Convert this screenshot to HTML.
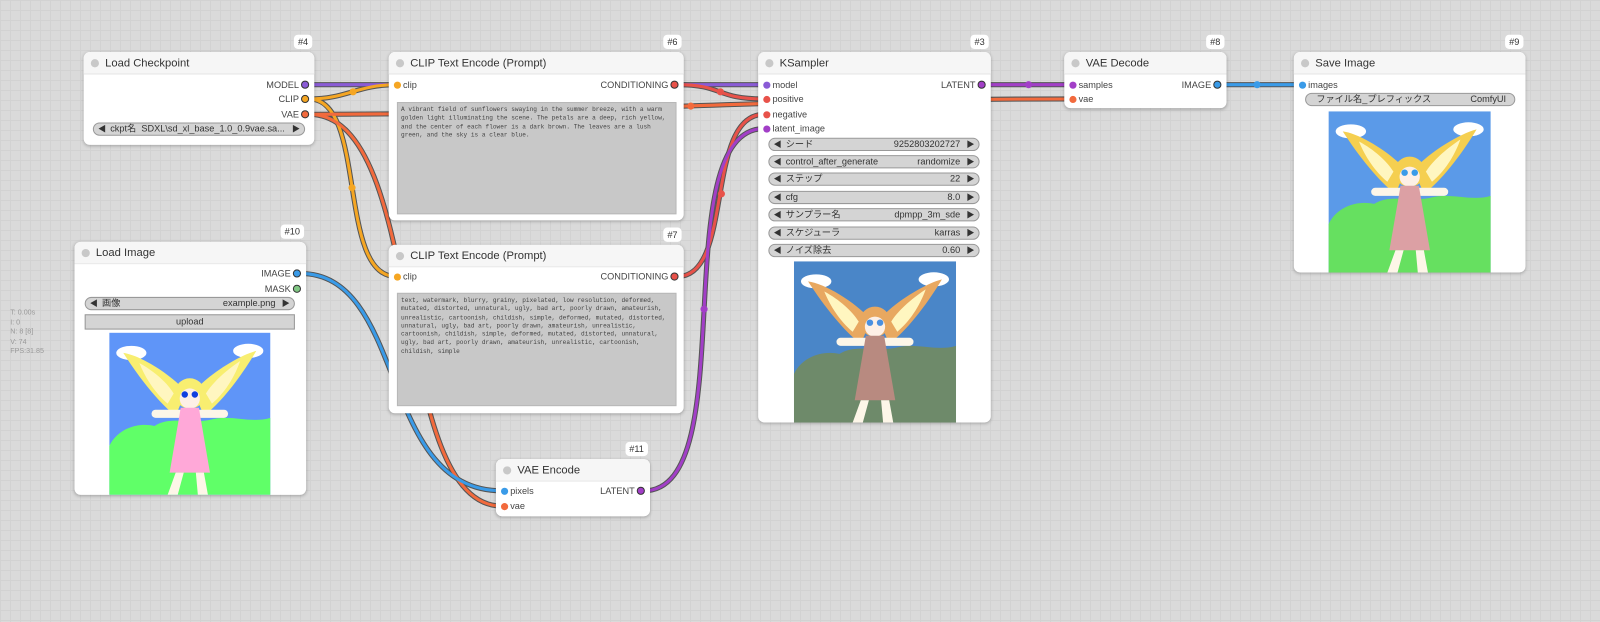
<!DOCTYPE html>
<html><head><meta charset="utf-8"><style>
*{box-sizing:border-box;margin:0;padding:0}
body{width:1600px;height:610px;overflow:hidden;position:relative;font-family:"Liberation Sans","Noto Sans CJK JP",sans-serif;
background-color:#dadada;
background-image:linear-gradient(#d2d2d2 1px,transparent 1px),linear-gradient(90deg,#d2d2d2 1px,transparent 1px);
background-size:10px 10px;}
#wrap{position:absolute;left:0;top:0;width:1568px;height:598px;transform:scale(1.0204);transform-origin:0 0}
.node{position:absolute;background:#fff;border-radius:6px;box-shadow:0 1px 3px rgba(0,0,0,.25);}
.title{height:22px;background:#f6f6f6;border-bottom:1px solid #e4e4e4;border-radius:6px 6px 0 0;font-size:11px;color:#333;line-height:22px;padding-left:21px;position:relative}
.title:before{content:"";position:absolute;left:7px;top:7px;width:8px;height:8px;border-radius:50%;background:#c8c8c8}
.badge{position:absolute;top:-17px;right:2px;background:#fff;border-radius:4px;font-size:9px;color:#333;padding:1px 4px;height:14px;line-height:12px}
.row{position:absolute;font-size:9px;color:#444;height:12px;line-height:12px}
.in{left:5px;padding-left:9px}
.out{right:5px;padding-right:10px;text-align:right}
.dot{position:absolute;top:3px;width:7px;height:7px;border-radius:50%}
.in .dot{left:0}
.out .dot{right:0;border:1.5px solid #333;top:2px;width:8px;height:8px}
.w{position:absolute;height:13px;border:1px solid #999;background:#d4d4d4;border-radius:7px;font-size:9px;color:#333;line-height:11px;padding:0 18px 0 16px}
.w:before{content:"◀";position:absolute;left:4px;font-size:8px}
.w:after{content:"▶";position:absolute;right:4px;font-size:8px}
.w span{float:right}
.ta{position:absolute;background:#c8c8c8;border:1px solid #b8b8b8;font-family:"Liberation Mono","DejaVu Sans Mono",monospace;font-size:6px;line-height:8.3px;color:#444;padding:3px 3px;white-space:normal;word-break:break-word}
svg.wires{position:absolute;left:0;top:0}
</style></head><body>
<svg width="0" height="0" style="position:absolute">
<defs>
<symbol id="pic" viewBox="0 0 160 160" preserveAspectRatio="none">
<rect width="160" height="160" style="fill:var(--sky)"/>
<path d="M0 112 C8 95 28 88 45 92 C60 82 80 90 100 86 C120 80 140 90 160 84 L160 160 L0 160Z" style="fill:var(--hill)"/>
<ellipse cx="22" cy="20" rx="15" ry="7" fill="#fff"/><ellipse cx="138" cy="18" rx="15" ry="7" fill="#fff"/>
<path d="M14 20 C30 22 60 40 76 58 L66 82 C50 70 30 45 14 20 Z M146 18 C130 22 100 40 84 58 L94 82 C110 70 130 45 146 18 Z" style="fill:var(--hair)"/>
<path d="M30 30 C45 38 58 50 64 60 L58 70 C46 60 36 45 30 30Z M130 28 C115 38 102 50 96 60 L102 70 C114 60 124 45 130 28Z" fill="#fff6c0"/>
<circle cx="80" cy="60" r="15" style="fill:var(--hair)"/>
<circle cx="80" cy="65" r="10" fill="#fdf0e6"/>
<circle cx="75" cy="61" r="3.2" style="fill:var(--eye)"/><circle cx="85" cy="61" r="3.2" style="fill:var(--eye)"/>
<rect x="42" y="76" width="76" height="8" rx="4" fill="#fdf6e8"/>
<path d="M71 74 L89 74 L100 138 L60 138Z" style="fill:var(--dress)"/>
<path d="M66 138 L74 138 L68 160 L58 160Z M86 138 L94 138 L98 160 L88 160Z" fill="#fdf6e8"/>
</symbol>
</defs></svg>
<div id="wrap">
<div style="position:absolute;left:10px;top:302px;font-size:7px;line-height:9.6px;color:#999">T: 0.00s<br>I: 0<br>N: 8 [8]<br>V: 74<br>FPS:31.85</div>

<svg class="wires" width="1600" height="610">
<g fill="none" stroke-linecap="round">
<g stroke="#555" stroke-width="5">
<path d="M303 83 L749 83"/>
<path d="M303 97 C340 97 350 83 388 83"/>
<path d="M303 97 C360 97 330 271 388 271"/>
<path d="M303 112 C600 112 700 97 1050 97"/>
<path d="M303 112 C420 112 380 496 492 496"/>
<path d="M664 83 C710 83 700 97 749 97"/>
<path d="M664 271 C720 271 690 112 749 112"/>
<path d="M294 268 C400 268 370 481 492 481"/>
<path d="M631 481 C730 481 650 126 749 126"/>
<path d="M965 83 L1050 83"/>
<path d="M1189 83 L1275 83"/>
</g>
<path d="M303 83 L749 83" stroke="#8a5bd6" stroke-width="3"/>
<path d="M303 97 C340 97 350 83 388 83" stroke="#f5a623" stroke-width="3"/>
<path d="M303 97 C360 97 330 271 388 271" stroke="#f5a623" stroke-width="3"/>
<path d="M303 112 C600 112 700 97 1050 97" stroke="#f26a3d" stroke-width="3"/>
<path d="M303 112 C420 112 380 496 492 496" stroke="#f26a3d" stroke-width="3"/>
<path d="M664 83 C710 83 700 97 749 97" stroke="#e8524a" stroke-width="3"/>
<path d="M664 271 C720 271 690 112 749 112" stroke="#e8524a" stroke-width="3"/>
<path d="M294 268 C400 268 370 481 492 481" stroke="#3a9be8" stroke-width="3"/>
<path d="M631 481 C730 481 650 126 749 126" stroke="#a23fc7" stroke-width="3"/>
<path d="M965 83 L1050 83" stroke="#a23fc7" stroke-width="3"/>
<path d="M1189 83 L1275 83" stroke="#3a9be8" stroke-width="3"/>
</g>
<circle cx="346" cy="90" r="3.5" fill="#f5a623"/><circle cx="345" cy="184" r="3.5" fill="#f5a623"/>
<circle cx="706" cy="90" r="3.5" fill="#e8524a"/><circle cx="707" cy="190" r="3.5" fill="#e8524a"/>
<circle cx="690" cy="303" r="3.5" fill="#a23fc7"/><circle cx="1008" cy="83" r="3.5" fill="#a23fc7"/>
<circle cx="1232" cy="83" r="3.5" fill="#3a9be8"/><circle cx="677" cy="104" r="3.5" fill="#f26a3d"/>
</svg>

<div class="node" style="left:82px;top:51px;width:226px;height:91px">
<div class="badge">#4</div><div class="title">Load Checkpoint</div>
<div class="row out" style="top:26px">MODEL<i class="dot" style="background:#8a5bd6"></i></div>
<div class="row out" style="top:40px">CLIP<i class="dot" style="background:#f5a623"></i></div>
<div class="row out" style="top:55px">VAE<i class="dot" style="background:#f26a3d"></i></div>
<div class="w" style="left:9px;top:69px;width:208px">ckpt名&nbsp; SDXL\sd_xl_base_1.0_0.9vae.sa...</div>
</div>

<div class="node" style="left:381px;top:51px;width:289px;height:165px">
<div class="badge">#6</div><div class="title">CLIP Text Encode (Prompt)</div>
<div class="row in" style="top:26px"><i class="dot" style="background:#f5a623"></i>clip</div>
<div class="row out" style="top:26px">CONDITIONING<i class="dot" style="background:#e8524a"></i></div>
<div class="ta" style="left:8px;top:49px;width:274px;height:110px">A vibrant field of sunflowers swaying in the summer breeze, with a warm golden light illuminating the scene. The petals are a deep, rich yellow, and the center of each flower is a dark brown. The leaves are a lush green, and the sky is a clear blue.</div>
</div>

<div class="node" style="left:381px;top:240px;width:289px;height:165px">
<div class="badge">#7</div><div class="title">CLIP Text Encode (Prompt)</div>
<div class="row in" style="top:25px"><i class="dot" style="background:#f5a623"></i>clip</div>
<div class="row out" style="top:25px">CONDITIONING<i class="dot" style="background:#e8524a"></i></div>
<div class="ta" style="left:8px;top:47px;width:274px;height:111px">text, watermark, blurry, grainy, pixelated, low resolution, deformed, mutated, distorted, unnatural, ugly, bad art, poorly drawn, amateurish, unrealistic, cartoonish, childish, simple, deformed, mutated, distorted, unnatural, ugly, bad art, poorly drawn, amateurish, unrealistic, cartoonish, childish, simple, deformed, mutated, distorted, unnatural, ugly, bad art, poorly drawn, amateurish, unrealistic, cartoonish, childish, simple</div>
</div>

<div class="node" style="left:743px;top:51px;width:228px;height:363px">
<div class="badge">#3</div><div class="title">KSampler</div>
<div class="row in" style="top:26px"><i class="dot" style="background:#8a5bd6"></i>model</div>
<div class="row out" style="top:26px">LATENT<i class="dot" style="background:#a23fc7"></i></div>
<div class="row in" style="top:40px"><i class="dot" style="background:#e8524a"></i>positive</div>
<div class="row in" style="top:55px"><i class="dot" style="background:#e8524a"></i>negative</div>
<div class="row in" style="top:69px"><i class="dot" style="background:#a23fc7"></i>latent_image</div>
<div class="w" style="left:10px;top:84px;width:207px">シード<span>9252803202727</span></div>
<div class="w" style="left:10px;top:101px;width:207px">control_after_generate<span>randomize</span></div>
<div class="w" style="left:10px;top:118px;width:207px">ステップ<span>22</span></div>
<div class="w" style="left:10px;top:136px;width:207px">cfg<span>8.0</span></div>
<div class="w" style="left:10px;top:153px;width:207px">サンプラー名<span>dpmpp_3m_sde</span></div>
<div class="w" style="left:10px;top:171px;width:207px">スケジューラ<span>karras</span></div>
<div class="w" style="left:10px;top:188px;width:207px">ノイズ除去<span>0.60</span></div>
<svg style="position:absolute;left:35px;top:205px;--sky:#4a86c8;--hill:#6e8a6a;--hair:#e8a860;--eye:#4a90e0;--dress:#b88a80" width="159" height="158"><use href="#pic"/></svg>
</div>

<div class="node" style="left:1043px;top:51px;width:159px;height:55px">
<div class="badge">#8</div><div class="title">VAE Decode</div>
<div class="row in" style="top:26px"><i class="dot" style="background:#a23fc7"></i>samples</div>
<div class="row out" style="top:26px">IMAGE<i class="dot" style="background:#3a9be8"></i></div>
<div class="row in" style="top:40px"><i class="dot" style="background:#f26a3d"></i>vae</div>
</div>

<div class="node" style="left:1268px;top:51px;width:227px;height:216px">
<div class="badge">#9</div><div class="title">Save Image</div>
<div class="row in" style="top:26px"><i class="dot" style="background:#3a9be8"></i>images</div>
<div class="w nw" style="left:11px;top:40px;width:206px;padding-left:10px;padding-right:8px">ファイル名_プレフィックス<span>ComfyUI</span></div>
<style>.nw:before,.nw:after{content:none}</style>
<svg style="position:absolute;left:34px;top:58px;--sky:#5b9ae8;--hill:#66e060;--hair:#f5cf50;--eye:#3a9be8;--dress:#dca0a4" width="159" height="158"><use href="#pic"/></svg>
</div>

<div class="node" style="left:73px;top:237px;width:227px;height:248px">
<div class="badge">#10</div><div class="title">Load Image</div>
<div class="row out" style="top:25px">IMAGE<i class="dot" style="background:#3a9be8"></i></div>
<div class="row out" style="top:40px">MASK<i class="dot" style="background:#81c784"></i></div>
<div class="w" style="left:10px;top:54px;width:206px">画像<span>example.png</span></div>
<div style="position:absolute;left:10px;top:71px;width:206px;height:15px;background:#d4d4d4;border:1px solid #999;font-size:9px;text-align:center;line-height:13px;color:#333">upload</div>
<svg style="position:absolute;left:34px;top:89px;--sky:#5f95f8;--hill:#60ff68;--hair:#f8ee70;--eye:#1040e0;--dress:#ffa8d8" width="158" height="159"><use href="#pic"/></svg>
</div>

<div class="node" style="left:486px;top:450px;width:151px;height:56px">
<div class="badge">#11</div><div class="title">VAE Encode</div>
<div class="row in" style="top:25px"><i class="dot" style="background:#3a9be8"></i>pixels</div>
<div class="row out" style="top:25px">LATENT<i class="dot" style="background:#a23fc7"></i></div>
<div class="row in" style="top:40px"><i class="dot" style="background:#f26a3d"></i>vae</div>
</div>
</div>
</body></html>
